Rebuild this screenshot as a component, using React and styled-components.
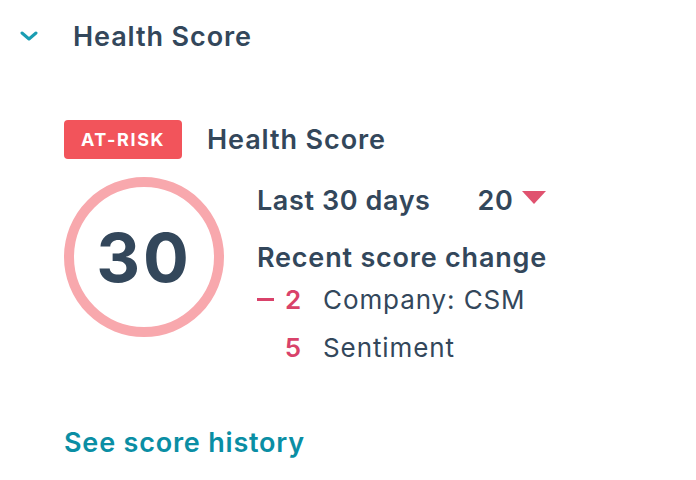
import React from 'react';
import styled, { createGlobalStyle } from 'styled-components';

const GlobalStyle = createGlobalStyle`
  body {
    margin: 0;
    background: #fff;
    font-family: 'Inter', 'Liberation Sans', sans-serif;
    color: #33475b;
  }
`;

const Page = styled.div`
  width: 696px;
  height: 480px;
  overflow: hidden;
`;

const Header = styled.div`
  display: flex;
  align-items: center;
  height: 72px;
  padding-left: 20px;
`;

const Chevron = styled.svg`
  width: 18px;
  height: 10px;
  margin-right: 35px;
`;

const HeaderTitle = styled.h2`
  margin: 0;
  font-size: 27px;
  font-weight: 600;
  letter-spacing: 0.9px;
  color: #33475b;
`;

const Body = styled.div`
  padding: 48px 0 0 64px;
`;

const TitleRow = styled.div`
  display: flex;
  align-items: center;
  gap: 25px;
`;

const Badge = styled.span`
  display: inline-flex;
  align-items: center;
  justify-content: center;
  width: 118px;
  height: 39px;
  border-radius: 4px;
  background: #f2545b;
  color: #fff;
  font-size: 18px;
  font-weight: 700;
  letter-spacing: 1.6px;
`;

const CardTitle = styled.h3`
  margin: 0;
  font-size: 27px;
  font-weight: 600;
  letter-spacing: 0.9px;
`;

const ScoreRow = styled.div`
  display: flex;
  gap: 33px;
  margin-top: 18px;
`;

const Ring = styled.div`
  box-sizing: border-box;
  width: 160px;
  height: 160px;
  border-radius: 50%;
  border: 10px solid #f8a8ad;
  display: flex;
  align-items: center;
  justify-content: center;
  font-size: 68px;
  font-weight: 700;
  letter-spacing: 3px;
`;

const Details = styled.div`
  display: flex;
  flex-direction: column;
  padding-top: 6px;
`;

const PeriodRow = styled.div`
  display: flex;
  align-items: center;
  font-size: 27px;
  font-weight: 600;
  letter-spacing: 0.6px;
  height: 34px;
`;

const PeriodValue = styled.span`
  margin-left: 47px;
`;

const DownArrow = styled.span`
  width: 0;
  height: 0;
  margin-left: 9px;
  margin-top: -6px;
  border-left: 12px solid transparent;
  border-right: 12px solid transparent;
  border-top: 13px solid #e0526f;
`;

const Subhead = styled.div`
  margin-top: 24px;
  font-size: 27px;
  font-weight: 600;
  letter-spacing: 0.8px;
  height: 34px;
  line-height: 34px;
`;

const ChangeRow = styled.div`
  display: grid;
  grid-template-columns: 66px auto;
  align-items: center;
  height: 48px;
  font-size: 26px;
  letter-spacing: 0.9px;
`;

const Delta = styled.span`
  display: flex;
  align-items: center;
  gap: 11px;
  justify-content: flex-end;
  padding-right: 21px;
  color: #d9426a;
  font-weight: 600;
`;

const Dash = styled.span`
  width: 20px;
  height: 3px;
  background: #d9426a;
`;

const Label = styled.span`
  font-weight: 400;
`;

const Link = styled.a`
  display: inline-block;
  margin-top: 55px;
  font-size: 27px;
  font-weight: 600;
  letter-spacing: 0.8px;
  color: #0a8ea4;
  text-decoration: none;
`;

const changes = [
  { value: 2, label: 'Company: CSM', negative: true },
  { value: 5, label: 'Sentiment', negative: false },
];

export default function App() {
  return (
    <Page>
      <GlobalStyle />
      <Header>
        <Chevron viewBox="0 0 18 10">
          <path d="M2 2l7 6 7-6" fill="none" stroke="#1a9db2" strokeWidth="3" strokeLinecap="round" strokeLinejoin="round" />
        </Chevron>
        <HeaderTitle>Health Score</HeaderTitle>
      </Header>
      <Body>
        <TitleRow>
          <Badge>AT-RISK</Badge>
          <CardTitle>Health Score</CardTitle>
        </TitleRow>
        <ScoreRow>
          <Ring>30</Ring>
          <Details>
            <PeriodRow>
              Last 30 days
              <PeriodValue>20</PeriodValue>
              <DownArrow />
            </PeriodRow>
            <Subhead>Recent score change</Subhead>
            {changes.map((c) => (
              <ChangeRow key={c.label}>
                <Delta>
                  {c.negative && <Dash />}
                  {c.value}
                </Delta>
                <Label>{c.label}</Label>
              </ChangeRow>
            ))}
          </Details>
        </ScoreRow>
        <Link href="#">See score history</Link>
      </Body>
    </Page>
  );
}
